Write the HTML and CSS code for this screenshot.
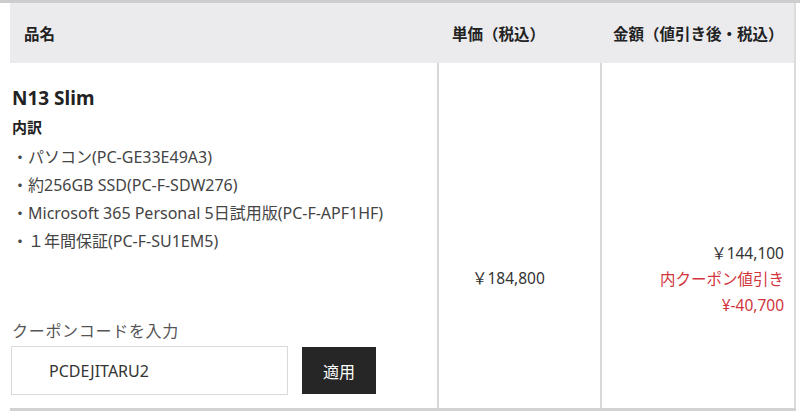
FILE: index.html
```html
<!DOCTYPE HTML>
<html>
<head>
  <meta charset="utf-8">
  <title>カート</title>
  <link rel="stylesheet" href="styles.css">
</head>
<body>
  <table class="cart">
    <colgroup>
      <col class="w-name">
      <col class="w-price">
      <col class="w-total">
    </colgroup>
    <thead>
      <tr>
        <th class="col-name">品名</th>
        <th class="col-price">単価（税込）</th>
        <th class="col-total">金額（値引き後・税込）</th>
      </tr>
    </thead>
    <tbody>
      <tr>
        <td class="col-name">
          <p class="product">N13 Slim</p>
          <p class="breakdown">内訳</p>
          <ul class="parts">
            <li>・パソコン(PC-GE33E49A3)</li>
            <li>・約256GB SSD(PC-F-SDW276)</li>
            <li>・Microsoft 365 Personal 5日試用版(PC-F-APF1HF)</li>
            <li>・１年間保証(PC-F-SU1EM5)</li>
          </ul>
          <div class="coupon">
            <p class="coupon-label">クーポンコードを入力</p>
            <div class="coupon-row">
              <input class="coupon-input" type="text" value="PCDEJITARU2">
              <button class="coupon-button">適用</button>
            </div>
          </div>
        </td>
        <td class="col-price">
          <p class="unit">￥184,800</p>
        </td>
        <td class="col-total">
          <p class="amount">￥144,100</p>
          <p class="discount">内クーポン値引き</p>
          <p class="discount">¥-40,700</p>
        </td>
      </tr>
    </tbody>
  </table>
</body>
</html>
```

FILE: styles.css
```css
body {
  margin: 0;
  font-family: "Noto Sans", "Noto Sans CJK JP", sans-serif;
  color: #333;
  background: #fff;
  border-top: 3px solid #cdcdcf;
}

p {
  margin: 0;
}

.cart {
  margin-left: 10px;
  width: 786px;
  table-layout: fixed;
  border-collapse: collapse;
  border-bottom: 3px solid #d2d2d4;
  border-right: 2px solid #dcdcdc;
}

.w-name {
  width: 428px;
}

.w-price {
  width: 163px;
}

.cart th {
  height: 60px;
  padding: 0;
  background-color: #ebebee;
  font-size: 15.5px;
  font-weight: bold;
  text-align: left;
  white-space: nowrap;
  color: #222;
}

.cart td {
  padding: 0;
  vertical-align: top;
}

th.col-name {
  padding-left: 14px;
}

th.col-price {
  padding-left: 14px;
}

th.col-total {
  padding-left: 12px;
}

td.col-name {
  padding: 22px 0 13px 2px;
}

td.col-price {
  border-left: 2px solid #d8d8d8;
  border-right: 2px solid #d8d8d8;
  text-align: left;
  padding-left: 33px;
}

td.col-total {
  text-align: right;
  padding-right: 10px;
}

.product {
  font-size: 19px;
  font-weight: bold;
  line-height: 26px;
  color: #222;
}

.breakdown {
  margin-top: 4px;
  font-size: 15px;
  font-weight: bold;
  line-height: 24px;
  color: #222;
}

.parts {
  list-style: none;
  margin: 4px 0 0;
  padding: 0;
  font-size: 16px;
  line-height: 28px;
  color: #444;
}

.coupon {
  margin-top: 64px;
}

.coupon-label {
  font-size: 16px;
  letter-spacing: 0.7px;
  line-height: 24px;
  color: #555;
}

.coupon-row {
  display: flex;
  align-items: center;
  gap: 14px;
  margin-top: 3px;
}

.coupon-input {
  box-sizing: border-box;
  width: 277px;
  height: 49px;
  margin: 0 0 0 -1px;
  padding: 0 0 0 37px;
  border: 1px solid #dadada;
  font-family: inherit;
  font-size: 16px;
  color: #333;
  outline: none;
}

.coupon-button {
  width: 74px;
  height: 47px;
  border: none;
  background-color: #262626;
  color: #fff;
  font-family: inherit;
  font-size: 16px;
  cursor: pointer;
}

.unit {
  margin-top: 203px;
  font-size: 15.5px;
  line-height: 24px;
}

.amount {
  margin-top: 178px;
  font-size: 15.5px;
  line-height: 25px;
}

.discount {
  font-size: 15.5px;
  line-height: 26px;
  color: #d1343c;
}
```
